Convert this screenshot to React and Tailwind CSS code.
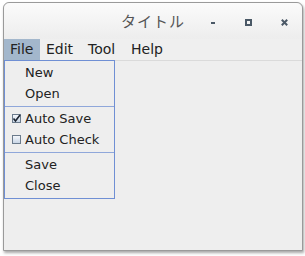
import React from 'react';

const font = { fontFamily: '"DejaVu Sans", sans-serif' };

const MenuItem = ({ children, check }) => (
  <div className="h-[21px] flex items-center text-[13px] text-[#222] relative pl-[20px]">
    {check !== undefined && (
      <span className="absolute left-[7px] top-[6px] w-[9px] h-[9px] border border-[#6b7b8c] bg-gradient-to-b from-[#f4f7fb] to-[#c9d6e6]">
        {check && (
          <svg width="9" height="9" viewBox="0 0 9 9" className="absolute left-[-1px] top-[-1px]">
            <path d="M1.5 4.5 L3.5 7 L8 1" stroke="#1c2430" strokeWidth="1.6" fill="none" />
          </svg>
        )}
      </span>
    )}
    {children}
  </div>
);

const Sep = () => <div className="mt-[2px] mb-[1px] h-px bg-[#8fa7da]" />;

export default function App() {
  return (
    <div className="w-[305px] h-[256px] bg-white pt-[2px] pl-[3px]" style={font}>
      <div className="relative w-[300px] h-[249px] border border-[#9a9a9a] rounded-t-[6px] bg-[#eeeeee] shadow-[1px_2px_3px_rgba(0,0,0,0.35)]">
        {/* title bar */}
        <div className="h-[36px] rounded-t-[6px] bg-gradient-to-b from-[#fbfbfb] to-[#ededed] flex items-center relative">
          <div className="flex-1 text-center text-[15px] text-[#555] tracking-[1px]" style={{ fontFamily: '"Noto Sans CJK JP", sans-serif' }}>
            タイトル
          </div>
          <div className="absolute left-[207px] top-[19px] w-[4px] h-[2px] bg-[#4a5866]" />
          <div className="absolute left-[241px] top-[16px] w-[7px] h-[7px] border-2 border-[#4a5866]" />
          <svg className="absolute left-[277px] top-[16px]" width="7" height="7" viewBox="0 0 7 7">
            <path d="M0.8 0.8 L6.2 6.2 M6.2 0.8 L0.8 6.2" stroke="#4a5866" strokeWidth="2" />
          </svg>
        </div>
        {/* menu bar */}
        <div className="h-[22px] flex items-stretch text-[14px] text-[#222] border-b border-[#dadada] bg-[#efefef]">
          <div className="w-[36px] pl-[6px] flex items-center bg-[#a3b7cc]">File</div>
          <div className="w-[42px] pl-[6px] flex items-center">Edit</div>
          <div className="w-[43px] pl-[6px] flex items-center">Tool</div>
          <div className="pl-[6px] flex items-center">Help</div>
        </div>
        {/* popup */}
        <div className="absolute left-0 top-[57px] w-[111px] border border-[#6f8fd4] bg-[#eeeeee] pt-[1px] pb-[2px]">
          <MenuItem>New</MenuItem>
          <MenuItem>Open</MenuItem>
          <Sep />
          <MenuItem check={true}>Auto Save</MenuItem>
          <MenuItem check={false}>Auto Check</MenuItem>
          <Sep />
          <MenuItem>Save</MenuItem>
          <MenuItem>Close</MenuItem>
        </div>
      </div>
    </div>
  );
}
